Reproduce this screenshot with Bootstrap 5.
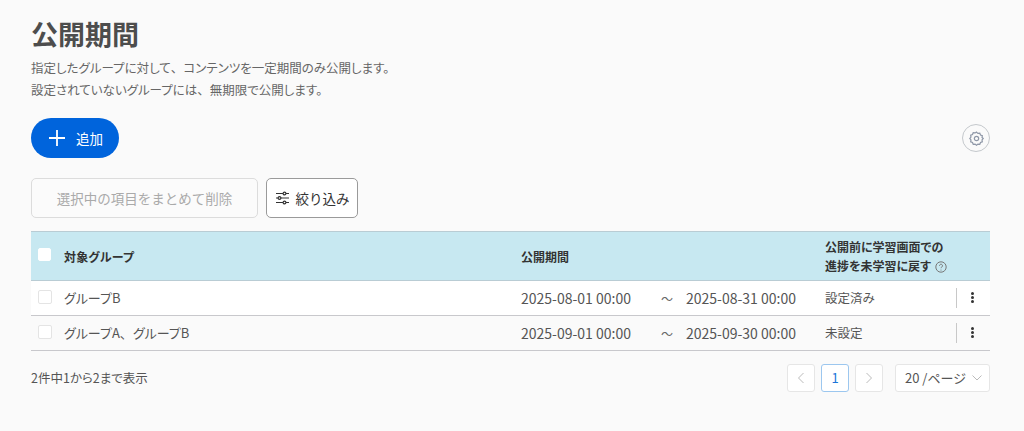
<!DOCTYPE html>
<html lang="ja">
<head>
<meta charset="utf-8">
<title>公開期間</title>
<link href="https://cdn.jsdelivr.net/npm/bootstrap@5.3.0/dist/css/bootstrap.min.css" rel="stylesheet">
<style>
html,body{height:100%;overflow:hidden}
body{background:#fafafa;font-family:"Noto Sans CJK JP","Noto Sans",sans-serif;color:#555;font-size:13px;font-feature-settings:"palt"}
.cm{font-feature-settings:normal}
.page-wrap{padding:17px 34px 0 31px}
.page-title{font-size:27px;font-weight:700;line-height:34px;color:#4d4d4d;margin:0 0 6px}
.page-desc{font-size:12.5px;line-height:21.5px;color:#666;margin:0 0 18px}
.add-btn{height:40px;width:88px;border-radius:20px;background:#0064dc;color:#fff;border:0;font-size:13.5px;padding:0 0 0 17px;gap:10px;font-feature-settings:"palt"}
.add-btn:hover{background:#0064dc;color:#fff}
.gear-btn{width:28px;height:28px;border-radius:50%;border:1px solid #c4c8cc;background:#fafafa;padding:0}
.tool-row{margin-top:20px;margin-bottom:13px;gap:8px}
.del-btn{width:227px;height:40px;border:1px solid #dcdcdc;background:#fbfbfb;border-radius:5px;color:#aaa;font-size:13.5px;padding:0}
.del-btn:disabled{border-color:#dcdcdc;background:#fbfbfb;color:#aaa;opacity:1}
.filter-btn{width:92px;height:40px;border:1px solid #9a9a9a;background:#fff;border-radius:5px;color:#333;font-size:13.5px;padding:0;gap:6px}
.data-table{table-layout:fixed;width:959px;margin:0;--bs-table-bg:transparent;border-collapse:collapse}
.data-table th{background:#c7e8f1;border-top:1px solid #b9ccd4;border-bottom:1px solid #b9ccd4;height:49px;padding:0 7px;font-size:12px;line-height:19px;font-weight:700;color:#333;vertical-align:middle}
.data-table td{height:35px;padding:0 7px;font-size:13px;color:#555;vertical-align:middle;border-bottom:1px solid #c8c8cc}
.data-table tr.row-white td{background:#fff}
.data-table tr.row-grey td{background:#fafafa}
.col-chk{width:27px}.col-grp{width:456px}.col-per{width:304px}.col-sts{width:138px}.col-act{width:34px}
.chk-box{display:block;width:14px;height:14px;background:#fff;border:1px solid #e4e4e4;border-radius:2px;margin-top:-2px}
.chk-head{border-color:#fff;margin-top:-3px;width:13px;height:13px}
.data-table th.chk-cell,.data-table td.chk-cell{padding:0 0 0 7px}
.data-table th.grp-cell,.data-table td.grp-cell{padding-left:6px}
.data-table th.grp-cell{letter-spacing:.2px}
.per-from{display:inline-block;width:140px}
.per-sep{display:inline-block;width:25px;color:#666;font-size:12px}
.data-table td.per-date{font-size:14px}
.data-table td.sts-cell{font-size:12.5px}
.act-wrap{border-left:1px solid #c8c8c8;height:20px;width:18px;margin-left:-7px;margin-top:-1px;padding-left:14px;display:flex;align-items:center}
.kebab{display:flex;flex-direction:column;gap:1px;width:3px}
.kebab i{display:block;width:3px;height:3px;border-radius:50%;background:#333}
.help-ico{vertical-align:-2px;margin-left:1px}
.foot-row{padding-top:13px;color:#555;font-size:12.5px}
.pg-btn{width:28px;height:28px;background:#fff;border:1px solid #e6e6e6;border-radius:3px;padding:0;color:#bbb;font-size:13px}
.pg-on{border-color:#9cc7ef;color:#1b74d8}
.pg-size{width:95px;height:28px;background:#fff;border:1px solid #e6e6e6;border-radius:3px;margin-left:6px;color:#555;font-size:13px;padding:0 0 0 9px;gap:6px}
.foot-pager{gap:6px}
</style>
</head>
<body>
<div class="page-wrap">
  <h1 class="page-title">公開期間</h1>
  <p class="page-desc">指定したグループに対して<span class="cm">、</span>コンテンツを一定期間のみ公開します。<br>設定されていないグループには<span class="cm">、</span>無期限で公開します。</p>
  <div class="d-flex justify-content-between align-items-center">
    <button type="button" class="btn add-btn d-flex align-items-center">
      <svg width="18" height="18" viewBox="0 0 18 18"><path d="M9 1v16M1 9h16" stroke="#fff" stroke-width="1.8" fill="none"/></svg>
      <span>追加</span>
    </button>
    <button type="button" class="btn gear-btn d-flex align-items-center justify-content-center" aria-label="設定">
      <svg width="15" height="15" viewBox="0 0 16 16" fill="none" stroke="#8f98a8" stroke-width="1.3"><path d="M8 1.2l1.5 1.4 2-.3.8 1.9 1.9.8-.3 2L15.200 8l-1.300 1.500.3 2-1.900.8-.8 1.900-2-.3L8 15.200l-1.500-1.300-2 .3-.8-1.900-1.900-.8.3-2L.8 8l1.300-1.500-.3-2 1.900-.8.8-1.900 2 .3z"/><circle cx="8" cy="8" r="2.300"/></svg>
    </button>
  </div>
  <div class="d-flex tool-row">
    <button type="button" class="btn del-btn" disabled>選択中の項目をまとめて削除</button>
    <button type="button" class="btn filter-btn d-flex align-items-center justify-content-center">
      <svg width="15" height="14" viewBox="0 0 15 14" fill="none" stroke="#333" stroke-width="1.200"><path d="M1 2.500h7M11 2.500h3M1 7h2M6 7h8M1 11.500h7M11 11.500h3"/><circle cx="9.500" cy="2.500" r="1.400"/><circle cx="4.500" cy="7" r="1.400"/><circle cx="9.500" cy="11.500" r="1.400"/></svg>
      <span>絞り込み</span>
    </button>
  </div>
  <table class="table data-table">
    <colgroup><col class="col-chk"><col class="col-grp"><col class="col-per"><col class="col-sts"><col class="col-act"></colgroup>
    <thead>
      <tr>
        <th class="chk-cell"><span class="chk-box chk-head"></span></th>
        <th class="grp-cell">対象グループ</th>
        <th>公開期間</th>
        <th>公開前に学習画面での<br>進捗を未学習に戻す
          <svg class="help-ico" width="12" height="12" viewBox="0 0 12 12" fill="none"><circle cx="6" cy="6" r="5.200" stroke="#777"/><path d="M4.500 4.700a1.500 1.500 0 1 1 2.300 1.300c-.6.400-.8.600-.8 1.200" stroke="#777"/><circle cx="6" cy="9" r=".6" fill="#777"/></svg>
        </th>
        <th></th>
      </tr>
    </thead>
    <tbody>
      <tr class="row-white">
        <td class="chk-cell"><span class="chk-box"></span></td>
        <td class="grp-cell">グループB</td>
        <td class="per-date"><span class="per-from">2025-08-01 00:00</span><span class="per-sep">～</span><span>2025-08-31 00:00</span></td>
        <td class="sts-cell">設定済み</td>
        <td><div class="act-wrap"><span class="kebab"><i></i><i></i><i></i></span></div></td>
      </tr>
      <tr class="row-grey">
        <td class="chk-cell"><span class="chk-box"></span></td>
        <td class="grp-cell">グループA<span class="cm">、</span>グループB</td>
        <td class="per-date"><span class="per-from">2025-09-01 00:00</span><span class="per-sep">～</span><span>2025-09-30 00:00</span></td>
        <td class="sts-cell">未設定</td>
        <td><div class="act-wrap"><span class="kebab"><i></i><i></i><i></i></span></div></td>
      </tr>
    </tbody>
  </table>
  <div class="d-flex justify-content-between align-items-center foot-row">
    <span>2件中1から2まで表示</span>
    <div class="d-flex align-items-center foot-pager">
      <button type="button" class="btn pg-btn d-flex align-items-center justify-content-center" aria-label="前へ"><svg width="8" height="12" viewBox="0 0 8 12" fill="none" stroke="#bbb"><path d="M6.500 1L1.500 6l5 5"/></svg></button>
      <button type="button" class="btn pg-btn pg-on">1</button>
      <button type="button" class="btn pg-btn d-flex align-items-center justify-content-center" aria-label="次へ"><svg width="8" height="12" viewBox="0 0 8 12" fill="none" stroke="#bbb"><path d="M1.500 1l5 5-5 5"/></svg></button>
      <div class="pg-size d-flex align-items-center"><span>20 /ページ</span><svg width="10" height="6" viewBox="0 0 10 6" fill="none" stroke="#bbb"><path d="M.5.500L5 5 9.500.5"/></svg></div>
    </div>
  </div>
</div>
<script src="https://cdn.jsdelivr.net/npm/bootstrap@5.3.0/dist/js/bootstrap.bundle.min.js"></script>
</body>
</html>
